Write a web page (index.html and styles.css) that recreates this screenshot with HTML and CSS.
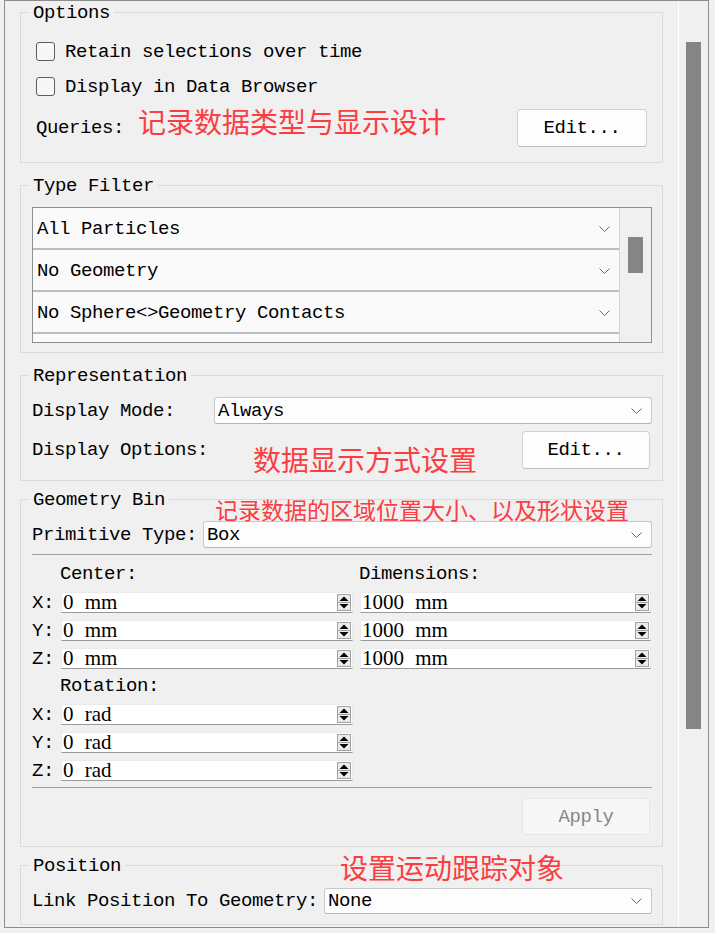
FILE: index.html
```html
<!DOCTYPE html>
<html>
<head>
<meta charset="utf-8">
<title>Query Settings</title>
<link rel="stylesheet" href="styles.css">
</head>
<body>
<div class="frame">
  <div class="content">
    <fieldset class="group g-options">
      <legend>Options</legend>
      <div class="opt-body">
        <div class="check-row"><span class="checkbox"></span><span>Retain selections over time</span></div>
        <div class="check-row"><span class="checkbox"></span><span>Display in Data Browser</span></div>
        <div class="queries-row"><span>Queries:</span><button class="btn btn-q">Edit...</button></div>
      </div>
    </fieldset>

    <fieldset class="group g-type">
      <legend>Type Filter</legend>
      <div class="type-body">
        <div class="tf-list">
          <div class="tf-rows">
            <div class="tf-item"><span>All Particles</span><svg class="chev" width="11" height="6" viewBox="0 0 11 6"><polyline points="0.5,0.5 5.5,5.5 10.5,0.5"/></svg></div>
            <div class="tf-item"><span>No Geometry</span><svg class="chev" width="11" height="6" viewBox="0 0 11 6"><polyline points="0.5,0.5 5.5,5.5 10.5,0.5"/></svg></div>
            <div class="tf-item"><span>No Sphere&lt;&gt;Geometry Contacts</span><svg class="chev" width="11" height="6" viewBox="0 0 11 6"><polyline points="0.5,0.5 5.5,5.5 10.5,0.5"/></svg></div>
            <div class="tf-item"><span></span></div>
          </div>
          <div class="tf-scroll"><div class="tf-thumb"></div></div>
        </div>
      </div>
    </fieldset>

    <fieldset class="group g-rep">
      <legend>Representation</legend>
      <div class="rep-body">
        <span class="lbl">Display Mode:</span>
        <div class="combo"><span>Always</span><svg class="chev" width="11" height="6" viewBox="0 0 11 6"><polyline points="0.5,0.5 5.5,5.5 10.5,0.5"/></svg></div>
        <span class="lbl">Display Options:</span>
        <button class="btn btn-r">Edit...</button>
      </div>
    </fieldset>

    <fieldset class="group g-geo">
      <legend>Geometry Bin</legend>
      <div class="geo-body">
        <div class="prim-row">
          <span class="lbl">Primitive Type:</span>
          <div class="combo"><span>Box</span><svg class="chev" width="11" height="6" viewBox="0 0 11 6"><polyline points="0.5,0.5 5.5,5.5 10.5,0.5"/></svg></div>
        </div>
        <div class="sep sep-top"></div>
        <div class="coords">
          <span class="head c2">Center:</span><span class="head c3">Dimensions:</span>

          <span class="ax">X:</span>
          <div class="spin"><span class="val">0 mm</span><svg class="arrows" width="14" height="17" viewBox="0 0 14 17"><rect x="0.5" y="0.5" width="13" height="16" fill="#ececec" stroke="#a0a0a0"/><line x1="1" y1="8.5" x2="13" y2="8.5" stroke="#a0a0a0"/><polygon points="2.5,7 11.5,7 7,2.5"/><polygon points="2.5,10 11.5,10 7,14.5"/></svg></div>
          <div class="spin"><span class="val">1000 mm</span><svg class="arrows" width="14" height="17" viewBox="0 0 14 17"><rect x="0.5" y="0.5" width="13" height="16" fill="#ececec" stroke="#a0a0a0"/><line x1="1" y1="8.5" x2="13" y2="8.5" stroke="#a0a0a0"/><polygon points="2.5,7 11.5,7 7,2.5"/><polygon points="2.5,10 11.5,10 7,14.5"/></svg></div>

          <span class="ax">Y:</span>
          <div class="spin"><span class="val">0 mm</span><svg class="arrows" width="14" height="17" viewBox="0 0 14 17"><rect x="0.5" y="0.5" width="13" height="16" fill="#ececec" stroke="#a0a0a0"/><line x1="1" y1="8.5" x2="13" y2="8.5" stroke="#a0a0a0"/><polygon points="2.5,7 11.5,7 7,2.5"/><polygon points="2.5,10 11.5,10 7,14.5"/></svg></div>
          <div class="spin"><span class="val">1000 mm</span><svg class="arrows" width="14" height="17" viewBox="0 0 14 17"><rect x="0.5" y="0.5" width="13" height="16" fill="#ececec" stroke="#a0a0a0"/><line x1="1" y1="8.5" x2="13" y2="8.5" stroke="#a0a0a0"/><polygon points="2.5,7 11.5,7 7,2.5"/><polygon points="2.5,10 11.5,10 7,14.5"/></svg></div>

          <span class="ax">Z:</span>
          <div class="spin"><span class="val">0 mm</span><svg class="arrows" width="14" height="17" viewBox="0 0 14 17"><rect x="0.5" y="0.5" width="13" height="16" fill="#ececec" stroke="#a0a0a0"/><line x1="1" y1="8.5" x2="13" y2="8.5" stroke="#a0a0a0"/><polygon points="2.5,7 11.5,7 7,2.5"/><polygon points="2.5,10 11.5,10 7,14.5"/></svg></div>
          <div class="spin"><span class="val">1000 mm</span><svg class="arrows" width="14" height="17" viewBox="0 0 14 17"><rect x="0.5" y="0.5" width="13" height="16" fill="#ececec" stroke="#a0a0a0"/><line x1="1" y1="8.5" x2="13" y2="8.5" stroke="#a0a0a0"/><polygon points="2.5,7 11.5,7 7,2.5"/><polygon points="2.5,10 11.5,10 7,14.5"/></svg></div>

          <span class="head c2">Rotation:</span>

          <span class="ax">X:</span>
          <div class="spin"><span class="val">0 rad</span><svg class="arrows" width="14" height="17" viewBox="0 0 14 17"><rect x="0.5" y="0.5" width="13" height="16" fill="#ececec" stroke="#a0a0a0"/><line x1="1" y1="8.5" x2="13" y2="8.5" stroke="#a0a0a0"/><polygon points="2.5,7 11.5,7 7,2.5"/><polygon points="2.5,10 11.5,10 7,14.5"/></svg></div>
          <span class="ax">Y:</span>
          <div class="spin"><span class="val">0 rad</span><svg class="arrows" width="14" height="17" viewBox="0 0 14 17"><rect x="0.5" y="0.5" width="13" height="16" fill="#ececec" stroke="#a0a0a0"/><line x1="1" y1="8.5" x2="13" y2="8.5" stroke="#a0a0a0"/><polygon points="2.5,7 11.5,7 7,2.5"/><polygon points="2.5,10 11.5,10 7,14.5"/></svg></div>
          <span class="ax">Z:</span>
          <div class="spin"><span class="val">0 rad</span><svg class="arrows" width="14" height="17" viewBox="0 0 14 17"><rect x="0.5" y="0.5" width="13" height="16" fill="#ececec" stroke="#a0a0a0"/><line x1="1" y1="8.5" x2="13" y2="8.5" stroke="#a0a0a0"/><polygon points="2.5,7 11.5,7 7,2.5"/><polygon points="2.5,10 11.5,10 7,14.5"/></svg></div>
        </div>
        <div class="sep sep-bot"></div>
        <div class="apply-row"><button class="btn btn-apply">Apply</button></div>
      </div>
    </fieldset>

    <fieldset class="group g-pos">
      <legend>Position</legend>
      <div class="pos-body">
        <span class="lbl">Link Position To Geometry:</span>
        <div class="combo combo-pos"><span>None</span><svg class="chev" width="11" height="6" viewBox="0 0 11 6"><polyline points="0.5,0.5 5.5,5.5 10.5,0.5"/></svg></div>
      </div>
    </fieldset>
  </div>
  <div class="vscroll"><div class="vthumb"></div></div>

  <div class="note n1">记录数据类型与显示设计</div>
  <div class="note n2">数据显示方式设置</div>
  <div class="note n3">记录数据的区域位置大小、以及形状设置</div>
  <div class="note n4">设置运动跟踪对象</div>
</div>
</body>
</html>
```

FILE: styles.css
```css
* { box-sizing: border-box; }
html, body { margin: 0; padding: 0; background: #f0f0f0; }
body {
  width: 715px;
  height: 933px;
  overflow: hidden;
  font-family: "Liberation Mono", "DejaVu Sans Mono", monospace;
  font-size: 19px;
  letter-spacing: -0.4px;
  color: #000;
}

.frame {
  position: relative;
  margin-left: 4px;
  width: 705px;
  height: 928px;
  border: 1px solid #8c8c8c;
  display: flex;
  overflow: hidden;
}
.content { flex: 1; padding: 0 15px; min-width: 0; }
.vscroll { width: 30px; border-left: 1px solid #ffffff; }
.vthumb { margin: 41px 0 0 7px; width: 15px; height: 687px; background: #858585; }

/* group boxes */
.group {
  margin: 0;
  padding: 0;
  min-width: 0;
  border: 1px solid #dadada;
}
.group legend {
  margin-left: 8px;
  padding: 0 4px;
  line-height: 22px;
  position: relative;
  top: 1px;
}
.g-type { margin-top: 11px; }
.g-rep { margin-top: 11px; }
.g-geo { margin-top: 7px; }
.g-pos { margin-top: 7px; }

/* options */
.opt-body { padding: 11px 15px 15px 15px; }
.check-row { height: 35px; display: flex; align-items: center; gap: 10px; }
.checkbox {
  width: 19px; height: 19px;
  border: 1px solid #5e5e5e;
  border-radius: 3px;
  background: #f7f7f7;
}
.queries-row {
  margin-top: 5px;
  height: 38px;
  display: flex;
  align-items: center;
  justify-content: space-between;
}

/* buttons */
.btn {
  font: inherit;
  letter-spacing: inherit;
  color: #000;
  background: #fdfdfd;
  border: 1px solid #d0d0d0;
  border-bottom-color: #bcbcbc;
  border-radius: 4px;
  padding: 0;
  height: 38px;
  width: 130px;
}
.btn-r { width: 128px; justify-self: end; margin-right: 2px; }
.btn-apply {
  width: 128px; height: 37px;
  color: #868686;
  background: #f7f7f7;
  border-color: #e6e6e6;
}

/* type filter */
.type-body { padding: 11px 10px 9px 11px; }
.tf-list {
  height: 136px;
  border: 1px solid #8b9199;
  display: flex;
  overflow: hidden;
}
.tf-rows { flex: 1; border-right: 1px solid #d3d6d9; overflow: hidden; }
.tf-item {
  height: 42px;
  background: #fafafa;
  border-bottom: 2px solid #b9bdc2;
  padding: 2px 9px 0 4px;
  display: flex;
  align-items: center;
  justify-content: space-between;
}
.tf-scroll { width: 31px; background: #f0f0f0; }
.tf-thumb { margin: 29px 0 0 8px; width: 15px; height: 36px; background: #858585; }

.chev { fill: none; stroke: #6a6a6a; stroke-width: 1; flex: none; }

/* combo */
.combo {
  height: 27px;
  background: #fdfdfd;
  border: 1px solid #c8c8c8;
  border-bottom-color: #b4b4b4;
  border-radius: 3px;
  padding: 0 9px 0 3px;
  display: flex;
  align-items: center;
  justify-content: space-between;
}
.lbl { display: flex; align-items: center; }

/* representation */
.rep-body {
  padding: 11px 10px 11px 11px;
  display: grid;
  grid-template-columns: 182px 1fr;
  grid-template-rows: 27px 38px;
  row-gap: 7px;
}

/* geometry */
.geo-body { padding: 11px 10px 11px 11px; }
.prim-row { display: grid; grid-template-columns: 171px 1fr; }
.sep { height: 1px; background: #a0a0a0; }
.sep-top { margin-top: 6px; }
.sep-bot { margin-top: 6px; }
.coords {
  margin-top: 9px;
  display: grid;
  grid-template-columns: 22px 292px 291px;
  column-gap: 7px;
  row-gap: 7px;
  grid-auto-rows: 21px;
}
.coords .head { height: 20px; display: flex; align-items: center; }
.coords .c2 { grid-column: 2; margin-left: -1px; }
.coords .c3 { grid-column: 3; margin-left: -1px; }
.ax { display: flex; align-items: center; grid-column: 1; }
.spin {
  height: 21px;
  background: #ffffff;
  border: 1px solid #ebebeb;
  border-bottom-color: #999999;
  display: flex;
  align-items: center;
  justify-content: space-between;
  padding: 0 1px 0 1px;
}
.val {
  font-family: "Liberation Serif", "Times New Roman", serif;
  font-size: 21px;
  letter-spacing: 0;
  word-spacing: 6px;
  line-height: 21px;
}
.arrows { flex: none; fill: #000; }
.apply-row { margin-top: 10px; display: flex; justify-content: flex-end; padding-right: 2px; }

/* position */
.pos-body {
  padding: 12px 10px 10px 11px;
  display: grid;
  grid-template-columns: 292px 1fr;
}
.combo-pos { height: 26px; }

/* annotations */
.note {
  position: absolute;
  font-family: "Noto Sans CJK SC", "Noto Sans", sans-serif;
  color: #fb3d42;
  letter-spacing: 0;
  line-height: 1;
  white-space: nowrap;
}
.n1 { left: 133px; top: 106px; font-size: 28px; }
.n2 { left: 248px; top: 444px; font-size: 28px; }
.n3 { left: 210px; top: 497px; font-size: 23px; }
.n4 { left: 335px; top: 852px; font-size: 28px; }
```
